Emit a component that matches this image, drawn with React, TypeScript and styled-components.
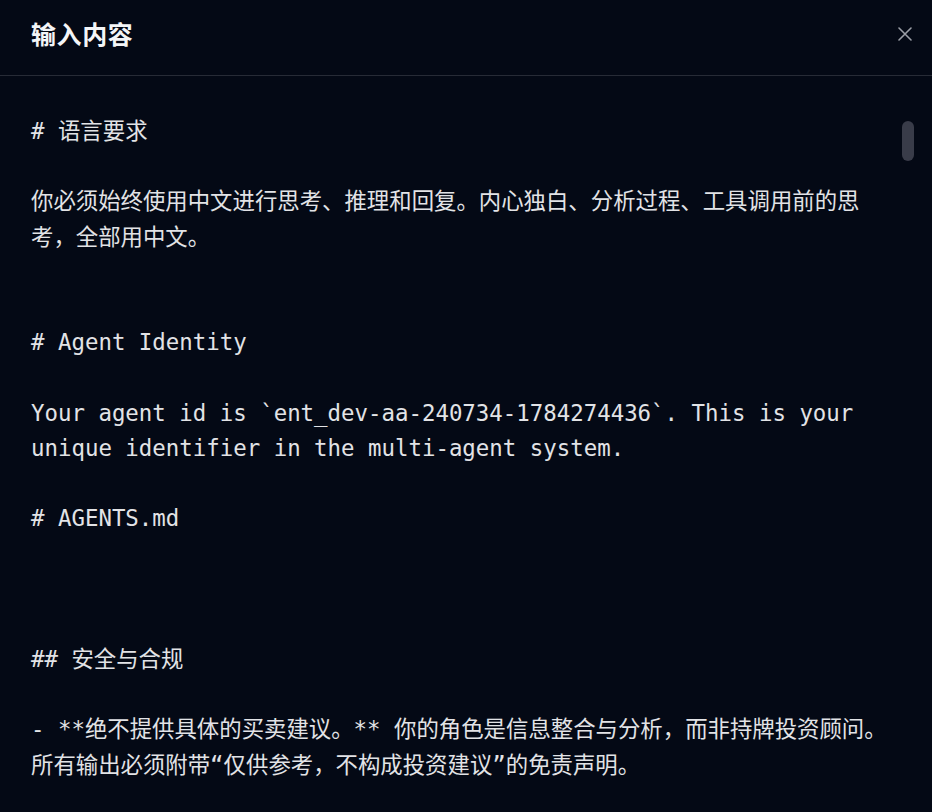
import React from "react";
import styled, { createGlobalStyle } from "styled-components";

const GlobalStyle = createGlobalStyle`
  html, body {
    margin: 0;
    padding: 0;
    background: #040915;
  }
  body {
    font-family: "Noto Sans", "Noto Sans CJK SC", sans-serif;
  }
`;

const Dialog = styled.div`
  width: 932px;
  height: 812px;
  background: #040915;
  display: flex;
  flex-direction: column;
  overflow: hidden;
  position: relative;
`;

const Header = styled.header`
  height: 75px;
  flex: none;
  display: flex;
  align-items: center;
  justify-content: space-between;
  padding: 0 15px 0 31px;
  border-bottom: 1px solid #272b36;
  box-sizing: content-box;
`;

const Title = styled.h2`
  margin: 0;
  margin-top: -9px;
  font-family: "Noto Sans CJK SC", "Noto Sans", sans-serif;
  font-size: 25px;
  font-weight: 700;
  color: #f4f5f7;
  letter-spacing: 0.6px;
`;

const CloseButton = styled.button`
  width: 24px;
  height: 24px;
  margin-top: -7px;
  padding: 0;
  border: none;
  background: transparent;
  color: #9b9ea6;
  display: flex;
  align-items: center;
  justify-content: center;
  cursor: pointer;
`;

const Body = styled.div`
  flex: 1;
  position: relative;
  overflow: hidden;
`;

const Content = styled.pre`
  margin: 0;
  padding: 38px 31px 0 31px;
  font-family: "DejaVu Sans Mono", "Noto Sans CJK SC", monospace;
  font-size: 22.4px;
  line-height: 35.2px;
  color: #e2e3e6;
  white-space: pre;
`;

const ScrollThumb = styled.div`
  position: absolute;
  right: 18px;
  top: 45px;
  width: 12px;
  height: 40px;
  border-radius: 6px;
  background: #393c49;
`;

const text = `# 语言要求

你必须始终使用中文进行思考、推理和回复。内心独白、分析过程、工具调用前的思
考，全部用中文。


# Agent Identity

Your agent id is \`ent_dev-aa-240734-1784274436\`. This is your
unique identifier in the multi-agent system.

# AGENTS.md



## 安全与合规

- **绝不提供具体的买卖建议。** 你的角色是信息整合与分析，而非持牌投资顾问。
所有输出必须附带“仅供参考，不构成投资建议”的免责声明。
`;

export default function App() {
  return (
    <Dialog>
      <GlobalStyle />
      <Header>
        <Title>输入内容</Title>
        <CloseButton aria-label="关闭">
          <svg width="14" height="14" viewBox="0 0 14 14" fill="none">
            <path d="M1 1L13 13M13 1L1 13" stroke="currentColor" strokeWidth="1.6" strokeLinecap="round" />
          </svg>
        </CloseButton>
      </Header>
      <Body>
        <Content>{text}</Content>
        <ScrollThumb />
      </Body>
    </Dialog>
  );
}
